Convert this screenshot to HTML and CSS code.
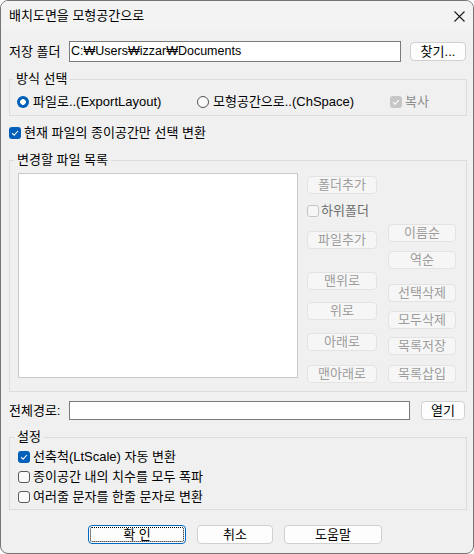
FILE: index.html
```html
<!DOCTYPE html>
<html lang="ko">
<head>
<meta charset="utf-8">
<link rel="stylesheet" href="styles.css">
</head>
<body>
<div class="window">
  <div class="titlebar">
    <span class="title">배치도면을 모형공간으로</span>
    <svg class="close" width="11" height="11" viewBox="0 0 11 11"><path d="M0.5 0.5L10.5 10.5M10.5 0.5L0.5 10.5" stroke="#1b1b1b" stroke-width="1.1" fill="none"/></svg>
  </div>
  <div class="main">
    <div class="row row-folder">
      <span class="label">저장 폴더</span>
      <div class="input input-folder">C:₩Users₩izzar₩Documents</div>
      <button class="btn btn-find">찾기...</button>
    </div>

    <fieldset class="group group-mode">
      <legend>방식 선택</legend>
      <div class="radio-row">
        <label class="opt opt-export"><span class="radio on"></span>파일로..(ExportLayout)</label>
        <label class="opt opt-chspace"><span class="radio"></span>모형공간으로..(ChSpace)</label>
        <label class="opt opt-copy disabled"><span class="check on dis"><svg viewBox="0 0 12 12"><path d="M3 6.2L5.1 8.2L9 4" stroke="#fff" stroke-width="1.1" fill="none"/></svg></span>복사</label>
      </div>
    </fieldset>

    <label class="opt opt-paper"><span class="check on"><svg viewBox="0 0 12 12"><path d="M3 6.2L5.1 8.2L9 4" stroke="#fff" stroke-width="1.1" fill="none"/></svg></span>현재 파일의 종이공간만 선택 변환</label>

    <fieldset class="group group-list">
      <legend>변경할 파일 목록</legend>
      <div class="list-area">
        <div class="listbox"></div>
        <div class="col col-left">
          <button class="btn dis m3">폴더추가</button>
          <label class="opt opt-sub disabled m11"><span class="check dis-empty"></span>하위폴더</label>
          <button class="btn dis m14">파일추가</button>
          <button class="btn dis m23">맨위로</button>
          <button class="btn dis m12">위로</button>
          <button class="btn dis m13">아래로</button>
          <button class="btn dis m14">맨아래로</button>
        </div>
        <div class="col col-right">
          <button class="btn dis m51">이름순</button>
          <button class="btn dis m9">역순</button>
          <button class="btn dis m15">선택삭제</button>
          <button class="btn dis m9">모두삭제</button>
          <button class="btn dis m8">목록저장</button>
          <button class="btn dis m10">목록삽입</button>
        </div>
      </div>
    </fieldset>

    <div class="row row-path">
      <span class="label">전체경로:</span>
      <div class="input input-path"></div>
      <button class="btn btn-open">열기</button>
    </div>

    <fieldset class="group group-set">
      <legend>설정</legend>
      <label class="opt set-row"><span class="check on"><svg viewBox="0 0 12 12"><path d="M3 6.2L5.1 8.2L9 4" stroke="#fff" stroke-width="1.1" fill="none"/></svg></span>선축척(LtScale) 자동 변환</label>
      <label class="opt set-row"><span class="check"></span>종이공간 내의 치수를 모두 폭파</label>
      <label class="opt set-row"><span class="check"></span>여러줄 문자를 한줄 문자로 변환</label>
    </fieldset>

    <div class="actions">
      <button class="btn btn-ok"><span class="focus">확 인</span></button>
      <button class="btn btn-cancel">취소</button>
      <button class="btn btn-help">도움말</button>
    </div>
  </div>
</div>
</body>
</html>
```

FILE: styles.css
```css
* { box-sizing: border-box; }
html, body { margin: 0; padding: 0; background: #ffffff; }
body {
  font-family: "Liberation Sans", "Noto Sans CJK KR", sans-serif;
  font-size: 13px;
  line-height: 16px;
  color: #000;
}
.window {
  width: 474px;
  height: 554px;
  border: 1px solid #757575;
  border-radius: 8px;
  background: #f0f0f0;
  overflow: hidden;
}
.titlebar {
  height: 30px;
  display: flex;
  align-items: center;
  justify-content: space-between;
  padding: 0 8px 0 8px;
  background: #f3f3f3;
}
.main { padding: 0 6px 0 8px; }
.row { display: flex; align-items: center; }
.label { width: 60px; flex: none; white-space: nowrap; }
.row-folder { margin-top: 10px; height: 21px; }
.input {
  background: #fff;
  border: 1px solid #7a7a7a;
  padding: 0 1px;
  line-height: 18px;
  white-space: nowrap;
  overflow: hidden;
}
.input-folder { width: 332px; height: 21px; font-size: 12.5px; }
.btn {
  font: inherit;
  color: #000;
  background: #fdfdfd;
  border: 1px solid #d0d0d0;
  border-radius: 4px;
  padding: 0;
  height: 18px;
  line-height: 16px;
  display: flex;
  align-items: center;
  justify-content: center;
  white-space: nowrap;
}
.btn-find { width: 56px; height: 19px; margin-left: 9px; }

.group {
  margin: 0;
  border: 1px solid #dcdcdc;
  width: 458px;
  min-width: 0;
}
.group legend {
  padding: 0 3px;
  margin-left: -4px;
  line-height: 16px;
}
.group-mode { margin-top: 9px; padding: 7px 6px 5px 7px; }
.radio-row { display: flex; height: 16px; align-items: center; }
.opt { display: flex; align-items: center; white-space: nowrap; }
.opt-export { width: 180px; }
.opt-chspace { width: 193px; }
.radio {
  width: 12px; height: 12px;
  border-radius: 50%;
  border: 1px solid #555;
  background: #fafafa;
  margin-right: 4px;
  flex: none;
}
.radio.on {
  border: none;
  background: radial-gradient(circle, #fff 0 2.6px, #005fb8 3.1px);
}
.check {
  width: 12px; height: 12px;
  border-radius: 3px;
  border: 1px solid #5a5a5a;
  background: #fbfbfb;
  margin-right: 3px;
  flex: none;
  display: flex;
}
.check svg { width: 12px; height: 12px; display: block; }
.check.on { background: #005fb8; border: none; }
.check.dis { background: #c6c6c6; }
.check.dis-empty { border-color: #c6c6c6; background: #f6f6f6; }
.disabled { color: #8d8d8d; }
.opt-paper { margin-top: 9px; height: 16px; }

.group-list { margin-top: 11px; padding: 5px 0 8px 8px; }
.list-area { display: flex; align-items: flex-start; }
.listbox {
  width: 280px; height: 205px;
  background: #fff;
  border: 1px solid #c9c9c9;
}
.col { display: flex; flex-direction: column; }
.col-left { width: 70px; margin-left: 9px; }
.col-right { width: 68px; margin-left: 11px; }
.btn.dis {
  width: 100%;
  background: #f6f6f6;
  border-color: #e3e3e3;
  color: #9d9d9d;
}
.opt-sub { height: 12px; color: #6d6d6d; }
.opt-sub .check { margin-right: 2px; }
.m3 { margin-top: 3px; }
.m8 { margin-top: 8px; }
.m9 { margin-top: 9px; }
.m10 { margin-top: 10px; }
.m11 { margin-top: 11px; }
.m12 { margin-top: 12px; }
.m13 { margin-top: 13px; }
.m14 { margin-top: 14px; }
.m15 { margin-top: 15px; }
.m23 { margin-top: 23px; }
.m51 { margin-top: 51px; }

.row-path { margin-top: 9px; height: 19px; }
.input-path { width: 341px; height: 19px; }
.btn-open { width: 44px; height: 19px; margin-left: 11px; }

.group-set { margin-top: 9px; padding: 2px 0 2px 8px; }
.set-row { height: 20px; }

.actions {
  display: flex;
  gap: 11px;
  padding-left: 79px;
  margin-top: 15px;
}
.btn-ok { width: 98px; height: 19px; border: 1px solid #0067c0; padding: 1px; }
.btn-ok .focus {
  display: flex; align-items: center; justify-content: center;
  width: 100%; height: 100%;
  border: 1px dotted #000;
  border-radius: 2px;
}
.btn-cancel { width: 76px; height: 19px; }
.btn-help { width: 98px; height: 19px; }
```
